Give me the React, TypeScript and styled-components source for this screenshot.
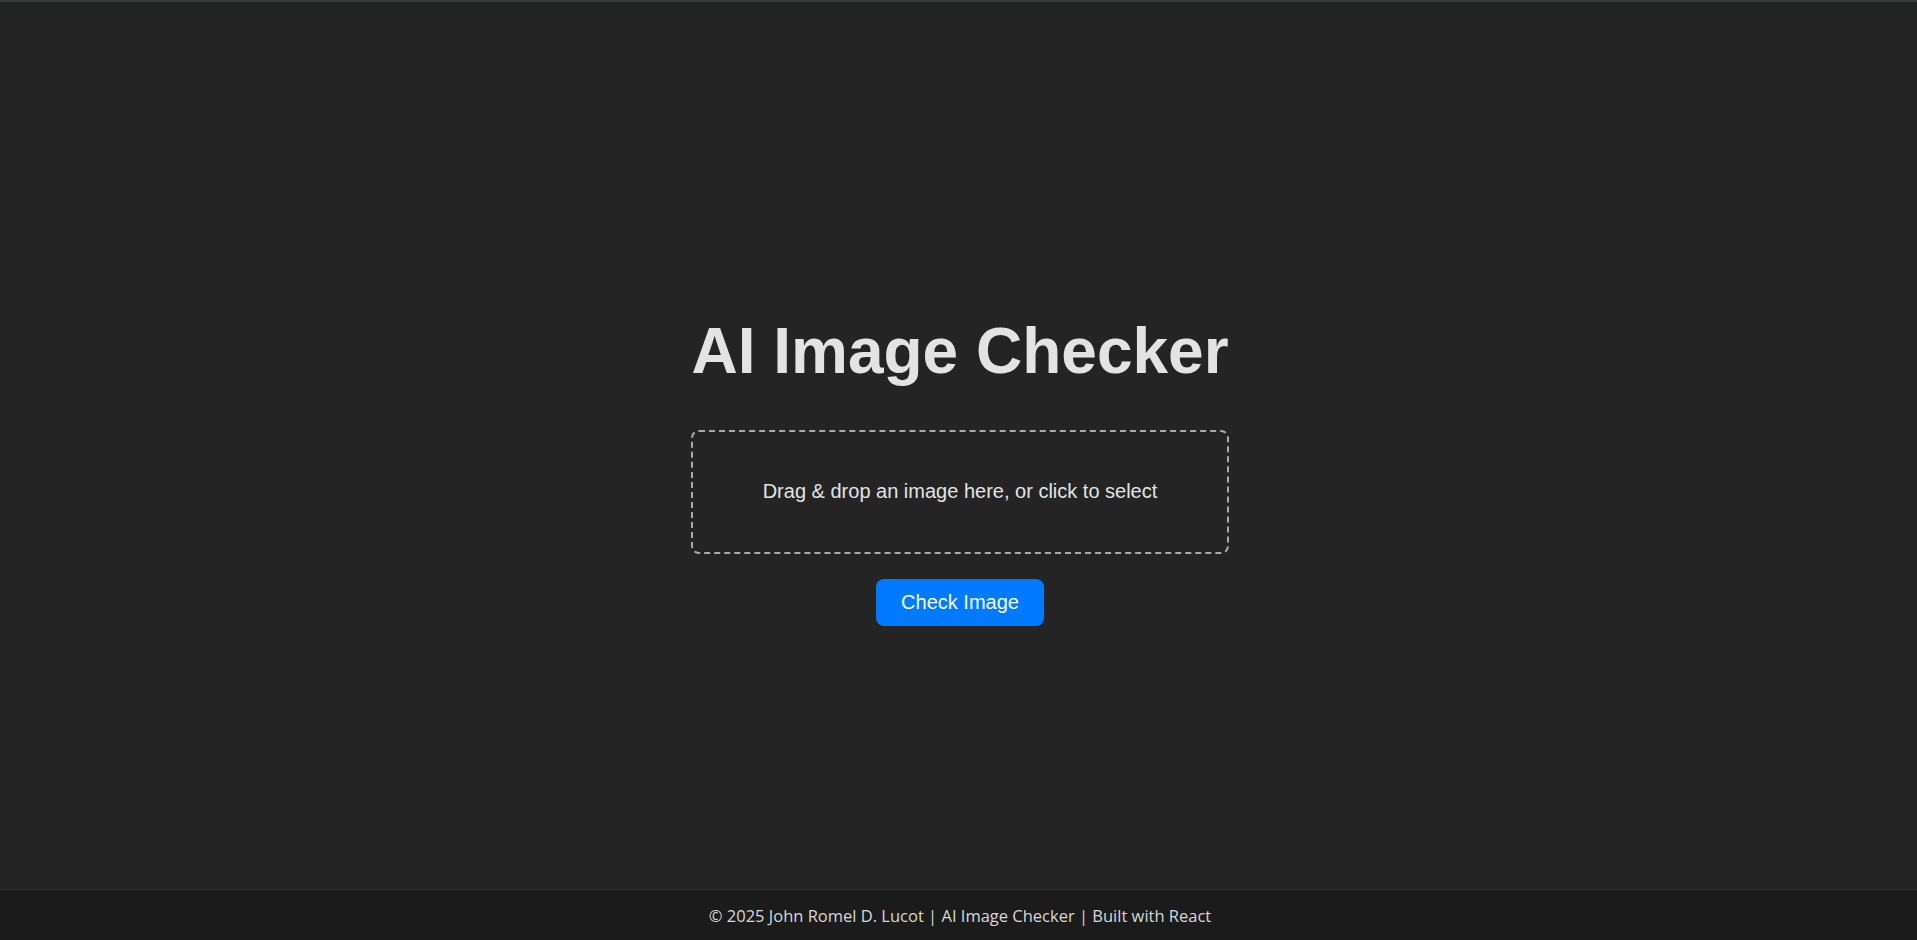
import React from "react";
import styled, { createGlobalStyle } from "styled-components";

const GlobalStyle = createGlobalStyle`
  html, body {
    margin: 0;
    padding: 0;
    background: #242424;
  }
  #root {
    min-height: 100vh;
    display: flex;
    flex-direction: column;
  }
`;

const Page = styled.div`
  flex: 1;
  display: flex;
  flex-direction: column;
  min-height: 100vh;
  border-top: 2px solid #38383f;
  box-sizing: border-box;
  background: #242424;
  color: rgba(255, 255, 255, 0.87);
  font-family: "Liberation Sans", Arial, sans-serif;
`;

const Main = styled.main`
  flex: 1;
  display: flex;
  flex-direction: column;
  align-items: center;
  justify-content: center;
  padding: 6px 0 0 3px;
`;

const Title = styled.h1`
  margin: 42px 0;
  font-size: 64px;
  font-weight: 700;
  line-height: normal;
  color: #e3e3e3;
`;

const DropZone = styled.div`
  width: 538px;
  height: 124px;
  box-sizing: border-box;
  border: 2px dashed #aaaaaa;
  border-radius: 8px;
  display: flex;
  align-items: center;
  justify-content: center;
  font-size: 20px;
  color: #e3e3e3;
  cursor: pointer;
`;

const CheckButton = styled.button`
  margin-top: 25px;
  padding: 12px 25px;
  border: none;
  border-radius: 8px;
  background: #007bff;
  color: #ffffff;
  font-family: "Liberation Sans", Arial, sans-serif;
  font-size: 20px;
  line-height: 23px;
  cursor: pointer;
`;

const Footer = styled.footer`
  border-top: 1px solid #333333;
  background: #1b1b1b;
  height: 51px;
  box-sizing: border-box;
  display: flex;
  align-items: center;
  justify-content: center;
  padding-left: 3px;
  font-family: "Open Sans", "Noto Sans", sans-serif;
  font-size: 16.5px;
  color: #d8d8d8;
`;

export default function App() {
  return (
    <>
      <GlobalStyle />
      <Page>
        <Main>
          <Title>AI Image Checker</Title>
          <DropZone>Drag &amp; drop an image here, or click to select</DropZone>
          <CheckButton>Check Image</CheckButton>
        </Main>
        <Footer>© 2025 John Romel D. Lucot | AI Image Checker | Built with React</Footer>
      </Page>
    </>
  );
}
